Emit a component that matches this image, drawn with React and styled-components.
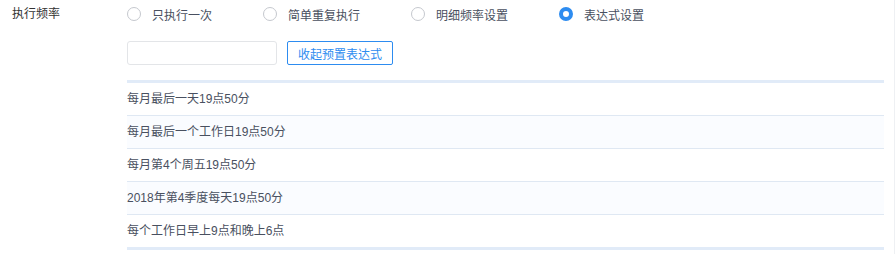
import React, { useState } from "react";
import styled, { createGlobalStyle } from "styled-components";

const GlobalStyle = createGlobalStyle`
  html, body { margin: 0; padding: 0; background: #fff; }
  body {
    font-family: "Liberation Sans", "Noto Sans CJK SC", sans-serif;
    font-size: 12px;
    color: #495060;
  }
  * { box-sizing: border-box; }
`;

const Page = styled.div`
  width: 895px;
  height: 254px;
  padding: 0 10px 0 12px;
  border-right: 1px solid #eef0f3;
`;

const FormItem = styled.div`
  display: flex;
  align-items: flex-start;
`;

const Label = styled.div`
  width: 115px;
  flex: none;
  height: 28px;
  line-height: 28px;
  color: #333;
`;

const Content = styled.div`
  flex: 1;
  min-width: 0;
`;

const RadioGroup = styled.div`
  display: flex;
  align-items: center;
  height: 28px;
`;

const RadioItem = styled.label`
  display: flex;
  align-items: center;
  gap: 11px;
  margin-right: 51px;
  cursor: pointer;
  color: #495060;
`;

const Circle = styled.span`
  width: 14px;
  height: 14px;
  border-radius: 50%;
  background: #fff;
  border: ${(p) => (p.$checked ? "4.5px solid #2d8cf0" : "1px solid #c5c8ce")};
  flex: none;
`;

const ToolRow = styled.div`
  display: flex;
  align-items: center;
  gap: 10px;
  margin-top: 13px;
`;

const TextInput = styled.input`
  width: 150px;
  height: 24px;
  border: 1px solid #e3e5e8;
  border-radius: 3px;
  outline: none;
  padding: 0 6px;
  font: inherit;
`;

const LinkButton = styled.button`
  height: 24px;
  padding: 0 10px;
  border: 1px solid #2d8cf0;
  border-radius: 2px;
  background: #fff;
  color: #2d8cf0;
  font: inherit;
  font-size: 12px;
  cursor: pointer;
`;

const List = styled.ul`
  list-style: none;
  margin: 15px 0 0;
  padding: 0;
  border-top: 3px solid #e1ebf8;
  border-bottom: 3px solid #e1ebf8;
`;

const Row = styled.li`
  height: 33px;
  line-height: 32px;
  border-bottom: 1px solid #dfe8f3;
  background: ${(p) => (p.$alt ? "#fafcff" : "#fff")};
  color: #495060;
  &:last-child {
    height: 32px;
    border-bottom: none;
  }
`;

const options = ["只执行一次", "简单重复执行", "明细频率设置", "表达式设置"];
const presets = [
  "每月最后一天19点50分",
  "每月最后一个工作日19点50分",
  "每月第4个周五19点50分",
  "2018年第4季度每天19点50分",
  "每个工作日早上9点和晚上6点",
];

export default function App() {
  const [mode, setMode] = useState(3);
  return (
    <>
      <GlobalStyle />
      <Page>
        <FormItem>
          <Label>执行频率</Label>
          <Content>
            <RadioGroup>
              {options.map((o, i) => (
                <RadioItem key={o} onClick={() => setMode(i)}>
                  <Circle $checked={mode === i} />
                  {o}
                </RadioItem>
              ))}
            </RadioGroup>
            <ToolRow>
              <TextInput />
              <LinkButton>收起预置表达式</LinkButton>
            </ToolRow>
            <List>
              {presets.map((p, i) => (
                <Row key={p} $alt={i % 2 === 1}>
                  {p}
                </Row>
              ))}
            </List>
          </Content>
        </FormItem>
      </Page>
    </>
  );
}
